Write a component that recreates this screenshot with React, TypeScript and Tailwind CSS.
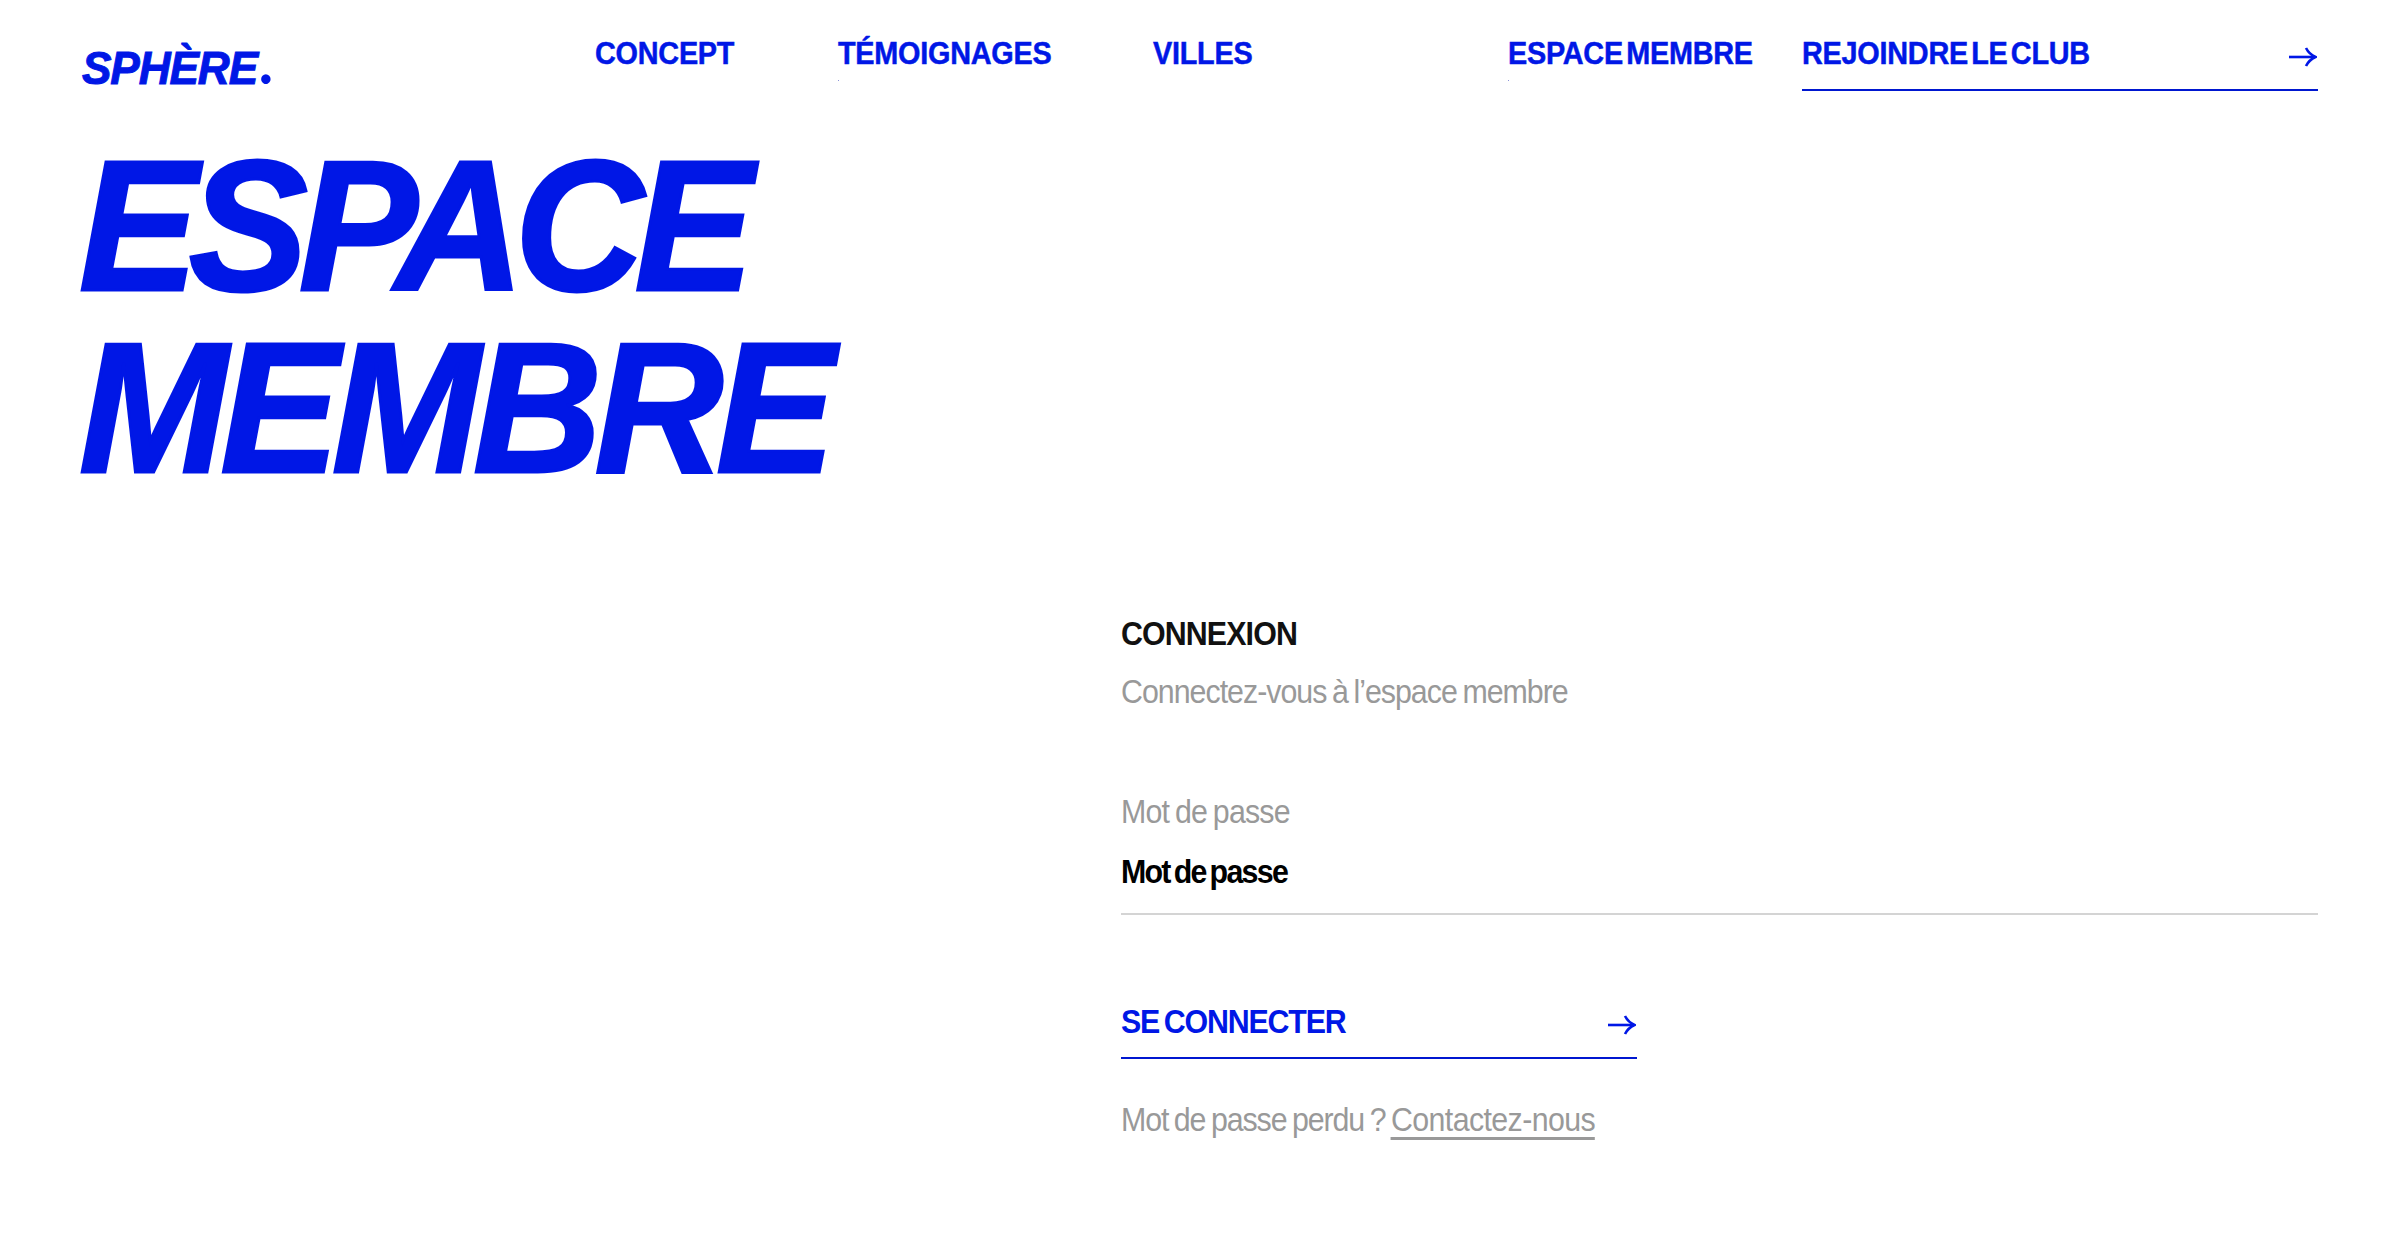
import React from "react";

const Arrow: React.FC = () => (
  <svg width="28" height="20" viewBox="0 0 28 20" fill="none" stroke="#0017e6" strokeWidth="2.6" className="shrink-0">
    <path d="M0 10H26" />
    <path d="M17 1C19 5 22 8 26.5 10C22 12 19 15 17 19" />
  </svg>
);

const navText =
  "block origin-left scale-x-90 whitespace-nowrap text-[32px] leading-[38px] font-bold tracking-[-0.008em] [word-spacing:-5px] [-webkit-text-stroke:0.5px_#0017e6] text-[#0017e6]";

const NavLink: React.FC<{ label: string; className: string; speck?: boolean }> = ({ label, className, speck }) => (
  <a href="#" className={`relative block ${className}`}>
    <span className={navText}>{label}</span>
    {speck && <span className="absolute left-0 top-[46px] h-px w-px bg-[#8c94d8]" />}
  </a>
);

export default function App() {
  return (
    <div className="min-h-[1260px] bg-white font-['Liberation_Sans',Arial,sans-serif] overflow-hidden">
      <header className="flex h-[92px] items-start px-[82px] pt-[34px]">
        <a href="#" className="block w-[513px] shrink-0 pt-[10px]">
          <span className="block origin-left scale-x-[0.96] whitespace-nowrap text-[46px] leading-[48px] font-bold italic tracking-[-0.025em] [-webkit-text-stroke:1px_#0017e6] text-[#0017e6]">
            SPHÈRE
            <span className="ml-[2px] font-['Lato',sans-serif] text-[60px] leading-[0] font-black not-italic [-webkit-text-stroke:0] ">.</span>
          </span>
        </a>
        <nav className="flex gap-[100px]">
          <NavLink label="CONCEPT" className="w-[143px]" />
          <NavLink label="TÉMOIGNAGES" className="w-[215px]" speck />
          <NavLink label="VILLES" className="w-[97px]" />
        </nav>
        <div className="ml-auto flex w-[810px] gap-[48px]">
          <NavLink label="ESPACE MEMBRE" className="w-[246px]" speck />
          <a href="#" className="flex h-[57px] flex-1 items-start justify-between border-b-2 border-[#0017d0] pr-[1px]">
            <span className={navText}>REJOINDRE LE CLUB</span>
            <span className="pt-[13px]"><Arrow /></span>
          </a>
        </div>
      </header>

      <main className="px-[82px]">
        <h1 className="mt-[43px] -ml-[3px] origin-left scale-x-[0.96] text-[186px] leading-[182px] font-bold italic [-webkit-text-stroke:3px_#0017e6] text-[#0017e6]">
          <span className="tracking-[-0.052em]">ESPACE</span>
          <br />
          <span className="tracking-[-0.042em]">MEMBRE</span>
        </h1>

        <section className="mt-[116px] ml-[1039px] flex flex-col">
          <h2 className="origin-left scale-x-[0.92] text-[33px] leading-[38px] font-bold tracking-[-0.029em] text-[#111]">CONNEXION</h2>
          <p className="mt-[20px] origin-left scale-x-[0.92] text-[33px] leading-[38px] tracking-[-0.033em] [word-spacing:-2px] text-[#999]">Connectez-vous à l’espace membre</p>

          <label className="mt-[82px] origin-left scale-x-[0.92] text-[33px] leading-[38px] tracking-[-0.027em] [word-spacing:-2px] text-[#999]">Mot de passe</label>
          <div className="mt-[22px] h-[62px] border-b-2 border-[#d4d4d4]">
            <input
              type="password"
              placeholder="Mot de passe"
              className="h-[38px] w-full origin-left scale-x-[0.92] text-[33px] leading-[38px] font-bold tracking-[-0.057em] [word-spacing:-3px] outline-none placeholder:text-black"
            />
          </div>

          <a href="#" className="mt-[88px] flex h-[56px] w-[516px] items-start justify-between border-b-2 border-[#0017d0] pr-[1px]">
            <span className="origin-left scale-x-[0.92] text-[33px] leading-[38px] font-bold tracking-[-0.038em] [word-spacing:-3px] text-[#0017e6]">SE CONNECTER</span>
            <span className="pt-[12px]"><Arrow /></span>
          </a>

          <p className="mt-[42px] origin-left scale-x-[0.92] text-[33px] leading-[38px] tracking-[-0.036em] [word-spacing:-2px] text-[#999]">
            Mot de passe perdu ? <a href="#" className="inline-block h-[39px] border-b-[3px] border-[#999] tracking-[-0.02em]">Contactez-nous</a>
          </p>
        </section>
      </main>
    </div>
  );
}
